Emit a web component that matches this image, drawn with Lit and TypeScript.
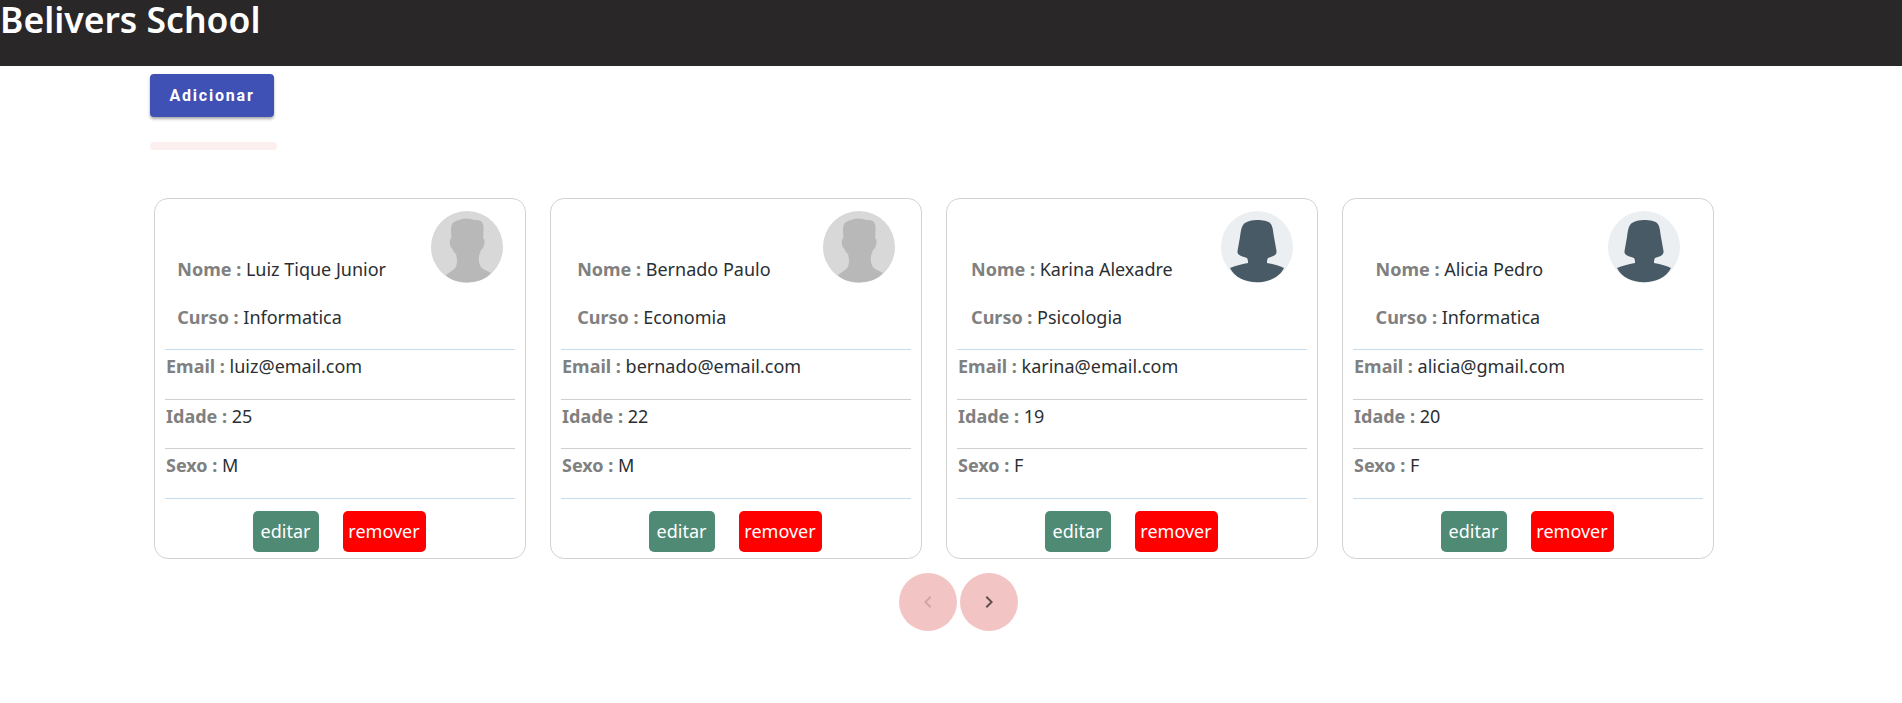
import {LitElement, html, css, svg} from 'lit';
import {customElement} from 'lit/decorators.js';

type Student = {
  nome: string;
  curso: string;
  email: string;
  idade: number;
  sexo: 'M' | 'F';
};

const students: Student[] = [
  {nome: 'Luiz Tique Junior', curso: 'Informatica', email: 'luiz@email.com', idade: 25, sexo: 'M'},
  {nome: 'Bernado Paulo', curso: 'Economia', email: 'bernado@email.com', idade: 22, sexo: 'M'},
  {nome: 'Karina Alexadre', curso: 'Psicologia', email: 'karina@email.com', idade: 19, sexo: 'F'},
  {nome: 'Alicia Pedro', curso: 'Informatica', email: 'alicia@gmail.com', idade: 20, sexo: 'F'},
];

const male = svg`<path fill="#b8b8b8" d="M30 8.5 C34 6.5 40 7.5 43 9 C48 8.5 51 10 52 13 C53 17 52.5 22 52 27 C53.5 28 54 31 53 34 C52.5 37 51 38 50 39 C49.5 41 48.5 43 48 45 C47.5 50 48 55 52 58 L60 62 C52 74 22 74 15 64 L22 59 C25 57 26 54 26 50 C26 47 25.5 45 25 43 C23 41 22 40 21.5 38 C20 36.5 19 35 19 33 C18.5 31 19 28 20.5 27 C20 22 19.5 17 21 13 C23 10 27 9.5 30 8.5 Z"/>`;

const female = svg`<path fill="#475a66" d="M36 9 C42 9 47 10 49 12 C52 15 52 20 53 26 L55.5 40 C56 44 53 45 47 47 C46 49 46 50 46 52 C53 53 59 55 63 57 C54 76 18 76 9 57 C14 55 20 53 27 52 C27 50 27 49 26 47 C20 45 16 44 16.5 40 L19 26 C20 18 21 14 24 12 C27 10 31 9 36 9 Z"/>`;

@customElement('app-root')
export class AppRoot extends LitElement {
  static styles = css`
    :host {
      display: block;
      font-family: 'Noto Sans', Arial, sans-serif;
      color: #2b2f33;
    }

    .topbar {
      height: 66px;
      background: #292728;
      color: white;
    }

    .topbar h1 {
      margin: 0;
      font-size: 35.5px;
      font-weight: 600;
      line-height: 39px;
    }

    .toolbar {
      padding: 8px 0 0 150px;
    }

    .add {
      display: block;
      width: 124px;
      height: 43px;
      border: none;
      border-radius: 4px;
      background: #3f51b5;
      color: white;
      font-family: Roboto, sans-serif;
      font-size: 16px;
      font-weight: 700;
      letter-spacing: 1.8px;
      box-shadow: 0 2px 3px rgba(0, 0, 0, 0.35);
    }

    .alert {
      width: 127px;
      height: 8px;
      margin-top: 25px;
      border-radius: 4px;
      background: #fbf0ef;
    }

    .cards {
      display: flex;
      gap: 24px;
      margin: 48px 0 0 154px;
    }

    .card {
      box-sizing: border-box;
      width: 372px;
      height: 361px;
      padding-top: 12px;
      border: 1px solid #d2d2d2;
      border-radius: 14px;
      font-size: 18px;
    }

    .head {
      display: flex;
      justify-content: space-around;
      height: 138px;
    }

    .head p {
      margin: 0;
      line-height: 24px;
    }

    .names {
      display: flex;
      flex-direction: column;
      gap: 24px;
      padding-top: 46px;
    }

    .avatar {
      width: 72px;
      height: 72px;
      flex: none;
      border-radius: 50%;
    }

    .avatar.m {
      background: #d8d8d8;
    }

    .avatar.f {
      background: #eceff1;
    }

    .rows {
      margin: 0 10px;
    }

    .row {
      box-sizing: border-box;
      height: 49.5px;
      padding: 3px 0 0 1px;
      border-top: 1px solid #cfcfcf;
      line-height: 26px;
    }

    .row.blue {
      border-top-color: #c5dcef;
    }

    .row.last {
      height: 13px;
      padding: 0;
    }

    b {
      color: #808080;
      font-weight: 700;
    }

    .actions {
      display: flex;
      justify-content: center;
      gap: 24px;
      padding-right: 2px;
    }

    .actions button {
      height: 41px;
      padding: 0;
      border: none;
      border-radius: 5px;
      color: white;
      font-family: inherit;
      font-size: 18px;
    }

    .edit {
      width: 66px;
      background: #4f8a75;
    }

    .remove {
      width: 83px;
      background: #f00;
    }

    .pager {
      display: flex;
      justify-content: center;
      gap: 3px;
      margin-top: 14px;
      padding-left: 15px;
    }

    .pager button {
      display: flex;
      align-items: center;
      justify-content: center;
      width: 58px;
      height: 58px;
      padding: 0;
      border: none;
      border-radius: 50%;
      background: #f3c4c4;
      color: rgba(0, 0, 0, 0.6);
    }

    .pager button:disabled {
      color: rgba(0, 0, 0, 0.15);
    }

    .pager svg {
      width: 24px;
      height: 24px;
      fill: currentColor;
    }
  `;

  _card(s: Student) {
    return html`
      <div class="card">
        <div class="head">
          <div class="names">
            <p><b>Nome : </b>${s.nome}</p>
            <p><b>Curso : </b>${s.curso}</p>
          </div>
          <svg class="avatar ${s.sexo === 'M' ? 'm' : 'f'}" viewBox="0 0 72 72">
            ${s.sexo === 'M' ? male : female}
          </svg>
        </div>
        <div class="rows">
          <div class="row blue"><b>Email : </b>${s.email}</div>
          <div class="row"><b>Idade : </b>${s.idade}</div>
          <div class="row"><b>Sexo : </b>${s.sexo}</div>
          <div class="row blue last"></div>
        </div>
        <div class="actions">
          <button class="edit">editar</button>
          <button class="remove">remover</button>
        </div>
      </div>
    `;
  }

  render() {
    return html`
      <div class="topbar"><h1>Belivers School</h1></div>
      <div class="toolbar">
        <button class="add">Adicionar</button>
        <div class="alert"></div>
      </div>
      <div class="cards">${students.map((s) => this._card(s))}</div>
      <div class="pager">
        <button disabled aria-label="Anterior">
          <svg viewBox="0 0 24 24"><path d="M15.41 7.41 14 6l-6 6 6 6 1.41-1.41L10.83 12z"></path></svg>
        </button>
        <button aria-label="Próximo">
          <svg viewBox="0 0 24 24"><path d="M10 6 8.59 7.41 13.17 12l-4.58 4.59L10 18l6-6z"></path></svg>
        </button>
      </div>
    `;
  }
}
